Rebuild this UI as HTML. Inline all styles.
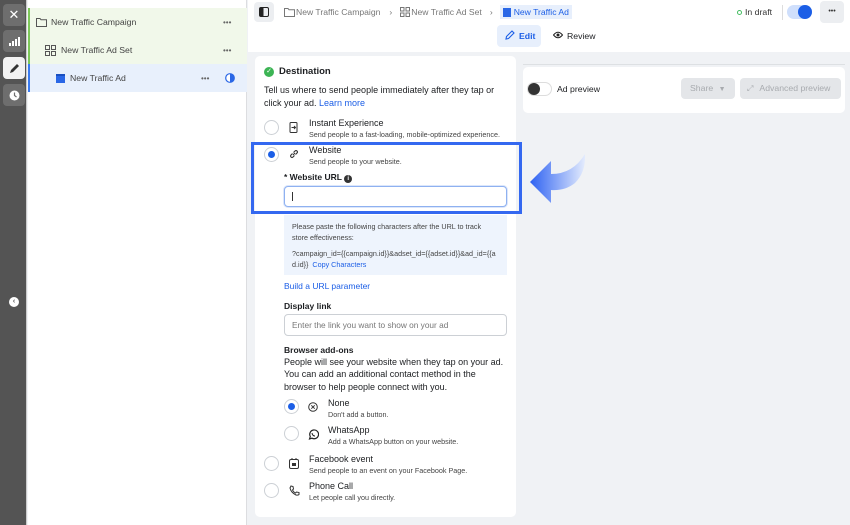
<!DOCTYPE html>
<html><head><meta charset="utf-8"><style>
*{box-sizing:border-box;margin:0;padding:0}
body{width:850px;height:525px;overflow:hidden;font-family:"Liberation Sans",Arial,sans-serif;color:#1c1e21;background:#f0f2f5;position:relative;font-size:12px}
.abs{position:absolute}
.dark{left:0;top:0;width:27px;height:525px;background:#545454;border-right:1px solid #ccc}
.db{position:absolute;left:3px;width:22px;height:22px;border-radius:4px;background:#6e6e6e;display:flex;align-items:center;justify-content:center;color:#fff;font-size:13px}
.side{left:28px;top:0;width:219px;height:525px;background:#fff;border-right:1px solid #dcdde0}
.row{position:absolute;left:0;width:219px;height:28px;display:flex;align-items:center;font-size:8.7px;color:#444}
.dots{position:absolute;font-size:8px;color:#666;letter-spacing:0px}
.top{left:248px;top:0;width:602px;height:52px;background:#fff}
.bc{font-size:8.6px;color:#777;top:5px;display:flex;align-items:center;height:14px}
.card{background:#fff;border-radius:5px}
.t{font-size:9px;color:#1c1e21}
.s{font-size:7.2px;color:#444}
.radio{position:absolute;width:15px;height:15px;border-radius:50%;border:1px solid #ccd0d5;background:#fff}
.radio.on::after{content:"";position:absolute;left:3px;top:3px;width:7px;height:7px;border-radius:50%;background:#1b5ee6}
.lbl{font-size:8.5px;font-weight:bold;color:#1c1e21}
.link{color:#1b5ee6}
</style></head><body>
<div class="abs dark">
  <div class="db" style="top:4px">✕</div>
  <div class="db" style="top:30px"><svg width="11" height="9"><rect x="0" y="6" width="2" height="3" fill="#fff"/><rect x="3" y="4" width="2" height="5" fill="#fff"/><rect x="6" y="2" width="2" height="7" fill="#fff"/><rect x="9" y="0" width="2" height="9" fill="#fff"/></svg></div>
  <div class="db" style="top:57px;background:#f2f2f2;color:#333"><svg width="11" height="11"><path d="M1 10 L2 7 L8 1 L10 3 L4 9 Z" fill="#333"/></svg></div>
  <div class="db" style="top:84px"><svg width="11" height="11"><circle cx="5.5" cy="5.5" r="5" fill="#fff"/><path d="M5.5 2.5V5.5L7.5 7" stroke="#6e6e6e" stroke-width="1.2" fill="none"/></svg></div>
  <div class="abs" style="left:9px;top:297px;width:10px;height:10px;border-radius:50%;background:#fff;color:#545454;font-size:7px;line-height:10px;text-align:center;font-weight:bold">‹</div>
</div>
<div class="abs side">
  <div class="abs" style="left:0;top:8px;width:219px;height:56px;background:#f1f8ea;border-left:2px solid #7ec85a"></div>
  <div class="abs" style="left:0;top:64px;width:219px;height:28px;background:#e8f0fc;border-left:2px solid #3a7bf0"></div>
  <div class="row" style="top:8px"><svg style="margin-left:8px" width="11" height="10"><path d="M0.5 1.5h3.5l1 1.2h5.5v6.8h-10z" fill="none" stroke="#555"/></svg><span style="margin-left:4px">New Traffic Campaign</span></div>
  <div class="dots" style="left:195px;top:18px">•••</div>
  <div class="row" style="top:36px"><svg style="margin-left:17px" width="11" height="11"><rect x="0.5" y="0.5" width="4" height="4" fill="none" stroke="#555"/><rect x="6.5" y="0.5" width="4" height="4" fill="none" stroke="#555"/><rect x="0.5" y="6.5" width="4" height="4" fill="none" stroke="#555"/><rect x="6.5" y="6.5" width="4" height="4" fill="none" stroke="#555"/></svg><span style="margin-left:5px">New Traffic Ad Set</span></div>
  <div class="dots" style="left:195px;top:46px">•••</div>
  <div class="row" style="top:64px"><div style="margin-left:28px;width:9px;height:9px;background:#2a67e6;border-top:2px solid #1a4fc0"></div><span style="margin-left:5px">New Traffic Ad</span></div>
  <div class="dots" style="left:173px;top:74px">•••</div>
  <svg class="abs" style="left:197px;top:73px" width="10" height="10"><circle cx="5" cy="5" r="4.3" fill="#fff" stroke="#2a67e6" stroke-width="1.2"/><path d="M5 0.7A4.3 4.3 0 0 1 5 9.3Z" fill="#2a67e6"/></svg>
</div>
<div class="abs top">
  <div class="abs" style="left:6px;top:2px;width:20px;height:20px;background:#eceef1;border-radius:4px"></div>
  <svg class="abs" style="left:11px;top:7px" width="10" height="10"><rect x="0.5" y="0.5" width="9" height="9" rx="1.5" fill="none" stroke="#222"/><rect x="1" y="1" width="3.5" height="8" fill="#222"/></svg>
  <div class="abs bc" style="left:36px"><svg width="11" height="10"><path d="M0.5 1.5h3.5l1 1.2h5.5v6.8h-10z" fill="none" stroke="#777"/></svg><span style="margin-left:1px">New Traffic Campaign</span><span style="margin:0 8px 0 9px">›</span><svg width="10" height="10"><rect x="0.5" y="0.5" width="3.5" height="3.5" fill="none" stroke="#777"/><rect x="6" y="0.5" width="3.5" height="3.5" fill="none" stroke="#777"/><rect x="0.5" y="6" width="3.5" height="3.5" fill="none" stroke="#777"/><rect x="6" y="6" width="3.5" height="3.5" fill="none" stroke="#777"/></svg><span style="margin-left:1px">New Traffic Ad Set</span><span style="margin:0 7px 0 8px">›</span><span style="background:#e7effc;color:#1b5ee6;padding:2px 3px;display:flex;align-items:center"><span style="display:inline-block;width:8px;height:9px;background:#2a67e6;margin-right:3px"></span>New Traffic Ad</span></div>
  <div class="abs" style="left:489px;top:10px;width:5px;height:5px;border-radius:50%;border:1.2px solid #45bd62"></div>
  <div class="abs" style="left:497px;top:7px;font-size:8.7px;color:#333">In draft</div>
  <div class="abs" style="left:534px;top:5px;width:1px;height:15px;background:#ddd"></div>
  <div class="abs" style="left:539px;top:5px;width:25px;height:14px;border-radius:7px;background:#cfdffc"></div>
  <div class="abs" style="left:550px;top:5px;width:14px;height:14px;border-radius:50%;background:#1b5ee6"></div>
  <div class="abs" style="left:572px;top:1px;width:24px;height:22px;border-radius:4px;background:#eceef1;text-align:center;font-size:7px;line-height:22px;color:#333">•••</div>
  <div class="abs" style="left:249px;top:25px;width:44px;height:22px;border-radius:4px;background:#e7effc;color:#1b5ee6;font-size:8.7px;font-weight:bold;line-height:22px;padding-left:8px"><svg width="10" height="10" style="vertical-align:-1px;margin-right:4px"><path d="M1 9L1.5 6.5L7 1L9 3L3.5 8.5Z" fill="none" stroke="#1b5ee6" stroke-width="1.1"/></svg>Edit</div>
  <div class="abs" style="left:305px;top:31px;font-size:8.7px;color:#1c1e21"><svg width="10" height="8" style="vertical-align:-0px;margin-right:4px"><path d="M0.5 4Q5 -1.5 9.5 4Q5 9.5 0.5 4Z" fill="none" stroke="#222"/><circle cx="5" cy="4" r="1.5" fill="#222"/></svg>Review</div>
</div>
<div class="abs card" style="left:255px;top:56px;width:261px;height:461px"></div>
<div class="abs" style="left:523px;top:64px;width:322px;height:1px;background:#dde0e3"></div>
<div class="abs card" style="left:523px;top:67px;width:322px;height:46px"></div>
<div class="abs" style="left:527px;top:82px;width:25px;height:14px;border-radius:7px;background:#fff;border:1px solid #ddd"></div>
<div class="abs" style="left:528px;top:83px;width:12px;height:12px;border-radius:50%;background:#333"></div>
<div class="abs" style="left:557px;top:84px;font-size:8.7px">Ad preview</div>
<div class="abs" style="left:681px;top:78px;width:54px;height:21px;border-radius:4px;background:#e4e6e9;color:#a8abaf;font-size:8.7px;line-height:21px;padding-left:9px">Share <span style="font-size:7px;margin-left:3px">▼</span></div>
<div class="abs" style="left:740px;top:78px;width:101px;height:21px;border-radius:4px;background:#e4e6e9;color:#a8abaf;font-size:8.7px;line-height:21px;padding-left:7px"><span style="font-size:8px;margin-right:6px">⤢</span>Advanced preview</div>

<div class="abs" style="left:264px;top:67px;width:10px;height:10px;border-radius:50%;background:#3cb454;color:#fff;font-size:7px;line-height:10px;text-align:center">✓</div>
<div class="abs" style="left:279px;top:66px;font-size:9.5px;font-weight:bold">Destination</div>
<div class="abs t" style="left:264px;top:84px;width:250px;line-height:12.5px">Tell us where to send people immediately after they tap or click your ad. <span class="link">Learn more</span></div>

<div class="radio" style="left:264px;top:120px"></div>
<svg class="abs" style="left:289px;top:122px" width="9" height="11"><rect x="1" y="0.5" width="7" height="10" rx="1" fill="none" stroke="#333"/><path d="M2.5 5.5h4M5 4l1.5 1.5L5 7" stroke="#333" fill="none"/></svg>
<div class="abs t" style="left:309px;top:118px">Instant Experience</div>
<div class="abs s" style="left:309px;top:130px">Send people to a fast-loading, mobile-optimized experience.</div>

<div class="radio on" style="left:264px;top:147px"></div>
<svg class="abs" style="left:289px;top:149px" width="10" height="10"><path d="M4 6L6 4M3.5 4.5L2 6a1.4 1.4 0 0 0 2 2L5.5 6.5M4.5 3.5L6 2a1.4 1.4 0 0 1 2 2L6.5 5.5" stroke="#333" fill="none" stroke-width="1.1"/></svg>
<div class="abs t" style="left:309px;top:145px">Website</div>
<div class="abs s" style="left:309px;top:157px">Send people to your website.</div>
<div class="abs lbl" style="left:284px;top:172px">* Website URL <span style="display:inline-block;width:8px;height:8px;border-radius:50%;background:#333;color:#fff;font-size:6px;line-height:8px;text-align:center;vertical-align:0px">i</span></div>
<div class="abs" style="left:284px;top:186px;width:223px;height:21px;border:1.5px solid #8fb1f0;border-radius:4px;background:#fff;box-shadow:0 0 0 1px #dbe6fb"><div style="position:absolute;left:7px;top:5px;width:1px;height:9px;background:#333"></div></div>
<div class="abs" style="left:251px;top:142px;width:271px;height:72px;border:3px solid #3468f0"></div>

<div class="abs" style="left:284px;top:215px;width:223px;height:60px;background:#eef4fd"></div>
<div class="abs s" style="left:292px;top:221px;width:205px;line-height:11px">Please paste the following characters after the URL to track store effectiveness:</div>
<div class="abs s" style="left:292px;top:248px;width:208px;line-height:11px;word-break:break-all">?campaign_id={{campaign.id}}&amp;adset_id={{adset.id}}&amp;ad_id={{ad.id}}&nbsp; <span class="link" style="word-break:normal">Copy Characters</span></div>
<div class="abs link" style="left:284px;top:281px;font-size:8.5px">Build a URL parameter</div>

<div class="abs lbl" style="left:284px;top:301px">Display link</div>
<div class="abs" style="left:284px;top:314px;width:223px;height:22px;border:1px solid #ccd0d5;border-radius:4px;background:#fff;font-size:8.3px;color:#777;padding:5px 7px">Enter the link you want to show on your ad</div>
<div class="abs lbl" style="left:284px;top:345px">Browser add-ons</div>
<div class="abs t" style="left:284px;top:356px;width:225px;line-height:12.3px">People will see your website when they tap on your ad. You can add an additional contact method in the browser to help people connect with you.</div>

<div class="radio on" style="left:284px;top:399px"></div>
<svg class="abs" style="left:308px;top:402px" width="10" height="10"><circle cx="5" cy="5" r="4.3" fill="none" stroke="#333"/><path d="M3.3 3.3L6.7 6.7M6.7 3.3L3.3 6.7" stroke="#333"/></svg>
<div class="abs t" style="left:328px;top:398px">None</div>
<div class="abs s" style="left:328px;top:410px">Don't add a button.</div>
<div class="radio" style="left:284px;top:426px"></div>
<svg class="abs" style="left:308px;top:429px" width="11" height="11"><path d="M1.5 10L2.3 7.5A4.4 4.4 0 1 1 4 9.2Z" fill="none" stroke="#222" stroke-width="1.2"/><path d="M4 4Q4.5 7 7 7" stroke="#222" fill="none"/></svg>
<div class="abs t" style="left:328px;top:425px">WhatsApp</div>
<div class="abs s" style="left:328px;top:437px">Add a WhatsApp button on your website.</div>

<div class="radio" style="left:264px;top:456px"></div>
<svg class="abs" style="left:289px;top:458px" width="10" height="11"><rect x="0.5" y="1.5" width="9" height="9" rx="1.5" fill="none" stroke="#333"/><rect x="3" y="5" width="4" height="3" fill="#333"/><path d="M3 0v2M7 0v2" stroke="#333"/></svg>
<div class="abs t" style="left:309px;top:454px">Facebook event</div>
<div class="abs s" style="left:309px;top:466px">Send people to an event on your Facebook Page.</div>
<div class="radio" style="left:264px;top:483px"></div>
<svg class="abs" style="left:289px;top:485px" width="11" height="11"><path d="M2 1L4 1.5L4.5 4L3.5 5Q5 7.5 6.5 8L7.5 7L10 7.5L10 9.5Q9 10.5 7 10Q2 7.5 1 3Z" fill="none" stroke="#333"/></svg>
<div class="abs t" style="left:309px;top:481px">Phone Call</div>
<div class="abs s" style="left:309px;top:493px">Let people call you directly.</div>

<svg class="abs" style="left:528px;top:150px" width="62" height="58">
<defs><linearGradient id="g" x1="0" x2="1" y1="0" y2="0"><stop offset="0" stop-color="#2e62f2"/><stop offset="1" stop-color="#e4ecfd"/></linearGradient></defs>
<path d="M2 32 L23 11 L23 24 Q45 24 57 4 Q58 22 47 33 Q37 41 23 40 L23 53 Z" fill="url(#g)"/>
</svg>
</body></html>
